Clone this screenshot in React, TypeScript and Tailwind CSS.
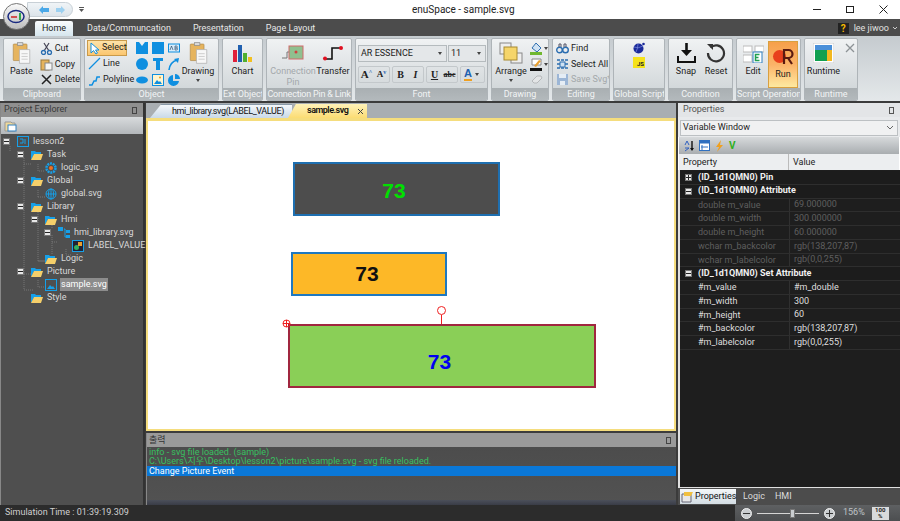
import { ReactNode } from 'react';

function Ico({ w = 16, h = 16, box, children, className = '' }: { w?: number; h?: number; box?: string; children: ReactNode; className?: string }) {
  return (
    <svg width={w} height={h} viewBox={box ?? `0 0 ${w} ${h}`} className={`shrink-0 ${className}`} fill="none">
      {children}
    </svg>
  );
}

function Clipboard({ w = 19, h = 22 }: { w?: number; h?: number }) {
  return (
    <Ico w={w} h={h} box="0 0 26 32">
      <rect x="1" y="3" width="20" height="24" rx="1" fill="#e6b45e" stroke="#b08a4a" />
      <rect x="7" y="1" width="8" height="4" fill="#d9d9d9" stroke="#888" />
      <path d="M10 11h15v20H10z" fill="#f7f7f7" stroke="#aaa" />
      <path d="M13 17h9M13 21h9M13 25h9" stroke="#bbb" />
    </Ico>
  );
}

function BigBtn({ label, icon, className = '', caret = false }: { label: string; icon: ReactNode; className?: string; caret?: boolean }) {
  return (
    <div className={`flex flex-col items-center ${className}`}>
      <div className="h-[22px] flex items-center justify-center mt-[3px]">{icon}</div>
      <div className="h-[14px] leading-[14px] whitespace-nowrap">{label}</div>
      {caret && <div className="w-0 h-0 border-x-[2.5px] border-x-transparent border-t-[3px] border-t-[#444] mt-[1px]" />}
    </div>
  );
}

function SmallBtn({ label, icon, className = '' }: { label: string; icon: ReactNode; className?: string }) {
  return (
    <div className={`flex items-center h-[15.5px] gap-[2px] whitespace-nowrap ${className}`}>
      {icon}
      <span>{label}</span>
    </div>
  );
}

function Group({ label, w, children, className = '', labelClass = '' }: { label: string; w: number; children: ReactNode; className?: string; labelClass?: string }) {
  return (
    <div
      className="flex flex-col h-[63px] rounded-[2px] border border-[#aeb4b8] bg-gradient-to-b from-[#f0f2f3] to-[#ccd2d5] overflow-hidden shrink-0"
      style={{ width: w }}
    >
      <div className={`flex-1 flex min-h-0 ${className}`}>{children}</div>
      <div className={`h-[12px] leading-[12px] text-center text-[#f2f4f5] bg-gradient-to-b from-[#a9afb2] to-[#b3b9bc] whitespace-nowrap ${labelClass}`}>{label}</div>
    </div>
  );
}

function FontBtn({ children, className = '' }: { children: ReactNode; className?: string }) {
  return <div className={`w-[15px] h-[15px] flex items-center justify-center text-[#222] ${className}`}>{children}</div>;
}

function Ribbon() {
  const blue = '#0f8fe0';
  return (
    <div className="h-[65px] bg-gradient-to-b from-[#c5cbcf] to-[#e4e8ea] flex items-start gap-[3px] pl-[3px] pt-[2px] text-[9px] text-[#1c1c1c]">
      <Group label="Clipboard" w={78} className="pl-[2px] gap-[3px]">
        <BigBtn label="Paste" icon={<Clipboard />} className="w-[32px]" />
        <div className="pt-[2px]">
          <SmallBtn label="Cut" icon={<Ico w={13} h={13}><path d="M4 1l5 8M9 1L4 9" stroke="#445" strokeWidth="1.2" /><circle cx="3.5" cy="10.5" r="2" stroke="#2a6db0" strokeWidth="1.3" /><circle cx="9.5" cy="10.5" r="2" stroke="#2a6db0" strokeWidth="1.3" /></Ico>} />
          <SmallBtn label="Copy" icon={<Ico w={13} h={13}><rect x="1" y="2" width="8" height="10" fill="#e6b45e" stroke="#9b7a3e" /><rect x="5" y="5" width="7" height="7" fill="#f6f6f6" stroke="#888" /></Ico>} />
          <SmallBtn label="Delete" icon={<Ico w={13} h={13}><path d="M2 2l9 9M11 2l-9 9" stroke="#222" strokeWidth="1.5" /></Ico>} />
        </div>
      </Group>

      <Group label="Object" w={135} className="pl-[2px]">
        <div className="w-[46px] pt-[1px] mr-[3px]">
          <SmallBtn label="Select" className="w-[40px] h-[16px] border border-[#c99a4a] bg-gradient-to-b from-[#fde3a9] to-[#fbc66f]" icon={<Ico w={12} h={13}><path d="M3 1v10l2.5-2.5L8 12l1.5-1-2-3H11z" fill="#fff" stroke={blue} /></Ico>} />
          <SmallBtn label="Line" icon={<Ico w={13} h={13}><path d="M1 12L12 1" stroke={blue} strokeWidth="1.2" /></Ico>} className="pl-[1px]" />
          <SmallBtn label="Polyline" icon={<Ico w={13} h={13}><path d="M1 12h3l2-4h2l1-4h3" stroke={blue} strokeWidth="1.5" /></Ico>} className="pl-[1px]" />
        </div>
        <div className="grid grid-cols-[12px_12px_12px] content-start gap-x-[4px] gap-y-[4px] pt-[3px] w-[44px] shrink-0">
          <Ico w={12} h={12}><path d="M0 0h3l3 4 3-4h3v12H0z" fill={blue} /></Ico>
          <Ico w={12} h={12}><rect width="12" height="12" fill={blue} /></Ico>
          <Ico w={12} h={12}><rect x=".5" y="2" width="11" height="8" fill="#d7ecfa" stroke={blue} /><path d="M2 8l1.5-4L5 8M7 4v4h1.5q1 0 1-1t-1-1H7m1.5 0q.8 0 .8-1T8.500 4H7" stroke="#135" strokeWidth=".6" /></Ico>
          <Ico w={12} h={12}><circle cx="6" cy="6" r="6" fill={blue} /></Ico>
          <Ico w={12} h={12}><path d="M1 0h10v3H8v9H4V3H1z" fill={blue} /></Ico>
          <Ico w={12} h={12}><path d="M1 12Q2 4 9 2" stroke={blue} strokeWidth="1.6" /><path d="M6 1l5-1-1 5z" fill={blue} /></Ico>
          <Ico w={12} h={12}><ellipse cx="6" cy="6" rx="6" ry="3.500" fill={blue} /></Ico>
          <Ico w={12} h={12}><rect x=".5" y=".5" width="11" height="11" fill="#fff5d0" stroke={blue} /><path d="M2 10l3-4 2 2 1-1 2 3z" fill={blue} /><circle cx="8" cy="3.500" r="1" fill="#e8a020" /></Ico>
          <Ico w={12} h={12}><path d="M5 1v6h6A5.500 5.500 0 1 1 5 1z" fill={blue} /><path d="M7 0a5 5 0 0 1 5 5H7z" fill={blue} /></Ico>
        </div>
        <BigBtn label="Drawing" icon={<Clipboard />} caret className="ml-[1px] w-[34px]" />
      </Group>

      <Group label="Ext Object" w={41}>
        <BigBtn
          label="Chart"
          className="w-full"
          icon={
            <Ico w={19} h={17}>
              <rect x="0" y="5" width="4" height="12" fill="#e0203a" />
              <rect x="5" y="0" width="4" height="17" fill="#2060b0" />
              <rect x="10" y="8" width="4" height="9" fill="#50b030" />
              <rect x="15" y="12" width="4" height="5" fill="#f2c020" />
            </Ico>
          }
        />
      </Group>

      <Group label="Connection Pin &amp; Link" w={86} className="pl-[5px]" labelClass="tracking-[-0.2px]">
        <div className="flex flex-col items-center w-[42px] text-[#a3a8ab] leading-[11px] text-center">
          <div className="h-[22px] mt-[3px] flex items-center">
            <Ico w={24} h={18}>
              <path d="M1 14h5V8h3" stroke="#777" />
              <rect x="8" y="2" width="14" height="13" fill="#8fc08f" stroke="#d06a6a" />
              <circle cx="15" cy="8" r="1.500" fill="#d04040" />
            </Ico>
          </div>
          <span className="mt-[2px]">Connection</span>
          <span>Pin</span>
        </div>
        <BigBtn
          label="Transfer"
          className="ml-[1px] w-[36px]"
          icon={
            <Ico w={22} h={16}>
              <path d="M3 14h7V3h9" stroke="#111" strokeWidth="1.6" />
              <circle cx="3" cy="13.500" r="2" fill="#e01020" />
              <circle cx="19" cy="3" r="2" fill="#e01020" />
            </Ico>
          }
        />
      </Group>

      <Group label="Font" w={133} className="flex-col pl-[2px] pt-[6px]">
        <div className="flex gap-[1px]">
          <div className="w-[89px] h-[17px] border border-[#b5bbbe] bg-[#e4e7e9] flex items-center justify-between px-[2px]">
            <span>AR ESSENCE</span>
            <div className="w-0 h-0 border-x-[2.5px] border-x-transparent border-t-[3px] border-t-[#444] mr-[2px]" />
          </div>
          <div className="w-[38px] h-[17px] border border-[#b5bbbe] bg-[#e4e7e9] flex items-center justify-between px-[2px]">
            <span>11</span>
            <div className="w-0 h-0 border-x-[2.5px] border-x-transparent border-t-[3px] border-t-[#444] mr-[2px]" />
          </div>
        </div>
        <div className="flex gap-[2px] mt-[4px] font-['Liberation_Serif',serif] font-bold">
          <div className="flex border border-[#c3c8cb] rounded-[2px]">
            <FontBtn className="text-[11px]">A<span className="text-[6px] text-[#2060b0] -mt-1">^</span></FontBtn>
            <FontBtn className="text-[9px]">A<span className="text-[6px] text-[#2060b0] -mt-1">v</span></FontBtn>
          </div>
          <div className="flex border border-[#c3c8cb] rounded-[2px]">
            <FontBtn className="text-[10px]">B</FontBtn>
            <FontBtn className="text-[10px] italic">I</FontBtn>
          </div>
          <div className="flex border border-[#c3c8cb] rounded-[2px]">
            <FontBtn className="text-[10px] underline">U</FontBtn>
            <FontBtn className="text-[8px] line-through">abc</FontBtn>
          </div>
          <div className="flex items-center border border-[#c3c8cb] rounded-[2px] w-[25px] pl-[3px] gap-[3px]">
            <span className="text-[11px] text-[#2060b0] border-b-2 border-[#f0a020] leading-[11px] font-['Liberation_Sans',sans-serif]">A</span>
            <div className="w-0 h-0 border-x-[2.5px] border-x-transparent border-t-[3px] border-t-[#444]" />
          </div>
        </div>
      </Group>

      <Group label="Drawing" w={58} className="pl-[2px]">
        <BigBtn
          label="Arrange"
          caret
          className="w-[34px]"
          icon={
            <Ico w={24} h={22}>
              <rect x="1" y="1" width="11" height="11" fill="#eee" stroke="#888" />
              <rect x="12" y="11" width="11" height="10" fill="#eee" stroke="#888" />
              <rect x="5" y="5" width="13" height="13" fill="#f5d56a" stroke="#a88a30" />
            </Ico>
          }
        />
        <div className="flex flex-col gap-[3px] pt-[3px] pl-[2px]">
          <div className="flex items-center gap-[1px]">
            <Ico w={13} h={13}><path d="M6 1l5 5-4 4-5-4z" fill="#cfe2f3" stroke="#3070b0" /><rect y="10" width="12" height="3" fill="#70b830" /></Ico>
            <div className="w-0 h-0 border-x-[2px] border-x-transparent border-t-[3px] border-t-[#444]" />
          </div>
          <div className="flex items-center gap-[1px]">
            <Ico w={13} h={13}><path d="M2 1h9v6H2z" fill="#fff" stroke="#888" /><path d="M4 8l5-6 2 1-5 6z" fill="#e8a030" /><rect y="10" width="12" height="3" fill="#111" /></Ico>
            <div className="w-0 h-0 border-x-[2px] border-x-transparent border-t-[3px] border-t-[#444]" />
          </div>
          <Ico w={13} h={11}><path d="M2 7l5-5h4l1 2-5 5H4z" fill="#e3e5e6" stroke="#b5b8ba" /></Ico>
        </div>
      </Group>

      <Group label="Editing" w={58} className="flex-col pl-[3px] pt-[2px]">
        <SmallBtn label="Find" icon={<Ico w={13} h={13}><circle cx="3.500" cy="8" r="2.800" stroke="#2a6db0" strokeWidth="1.400" /><circle cx="9.500" cy="8" r="2.800" stroke="#2a6db0" strokeWidth="1.400" /><path d="M3 5V2h2v3M8 5V2h2v3" stroke="#556" /></Ico>} />
        <SmallBtn label="Select All" icon={<Ico w={13} h={13}><path d="M1 2h11M1 6h11M1 10h11" stroke="#2a6db0" strokeWidth="1.500" strokeDasharray="3 1" /><rect x="4" y="4" width="5" height="5" fill="#cfe2f3" stroke="#2a6db0" /></Ico>} />
        <SmallBtn label="Save Svg*" className="text-[#a3a8ab]" icon={<Ico w={13} h={13}><rect x="1" y="1" width="11" height="11" fill="#9cb6d6" /><rect x="3" y="1" width="7" height="4" fill="#e5edf5" /><rect x="4" y="8" width="5" height="4" fill="#e5edf5" /></Ico>} />
      </Group>

      <Group label="Global Script" w={52} className="flex-col items-center pt-[3px] gap-[3px]">
        <Ico w={12} h={12}><circle cx="5.500" cy="6.500" r="5" fill="#1a2a9a" /><path d="M1 5q4 2 9-1M3 10q2-4 2-8" stroke="#7c8ce0" strokeWidth=".7" /><circle cx="10.500" cy="2" r="1.300" fill="#1a2a9a" /></Ico>
        <div className="w-[12px] h-[11px] bg-[#f5e21a] flex items-end justify-end text-[6px] leading-[8px] font-bold pr-[1px] text-[#222]">JS</div>
      </Group>

      <Group label="Condition" w={65} className="pl-[6px] gap-[7px]">
        <BigBtn
          label="Snap"
          className="w-[22px]"
          icon={
            <Ico w={19} h={20}>
              <path d="M9.500 0v9" stroke="#111" strokeWidth="2.600" />
              <path d="M4 7h11l-5.500 6z" fill="#111" />
              <path d="M1 13v6h17v-6" stroke="#111" strokeWidth="2" />
            </Ico>
          }
        />
        <BigBtn
          label="Reset"
          className="w-[24px]"
          icon={
            <Ico w={20} h={20}>
              <path d="M4.500 4.500A8 8 0 1 1 2 10" stroke="#333" strokeWidth="2.200" />
              <path d="M1 1h6v6z" fill="#333" />
            </Ico>
          }
        />
      </Group>

      <Group label="Script Operation" w={65} className="pl-[4px] gap-[3px]">
        <BigBtn
          label="Edit"
          className="w-[24px]"
          icon={
            <Ico w={21} h={19}>
              <rect x="0" y="2" width="9" height="6" fill="#fff" stroke="#bbb" />
              <rect x="12" y="2" width="9" height="6" fill="#fff" stroke="#bbb" />
              <rect x="0" y="11" width="9" height="7" fill="#fff" stroke="#bbb" />
              <rect x="10" y="8" width="9" height="11" fill="#fff" stroke="#3080c0" />
              <path d="M16.500 10.500h-4v6h4M12.500 13.500h3" stroke="#20a050" strokeWidth="1.500" />
            </Ico>
          }
        />
        <div className="w-[30px] h-[47px] mt-[2px] border border-[#d9a040] bg-gradient-to-b from-[#f6a04a] via-[#fbb368] to-[#fde9a0]">
          <BigBtn
            label="Run"
            className="w-full"
            icon={
              <Ico w={22} h={17}>
                <circle cx="7.500" cy="8.500" r="6.500" fill="#e8401c" />
                <path d="M12 16V2h4.500a3.500 3.500 0 0 1 0 8H12m4 0l4 6" stroke="#5a1a10" strokeWidth="2.200" />
              </Ico>
            }
          />
        </div>
      </Group>

      <Group label="Runtime" w={54} className="pl-[3px]">
        <BigBtn
          label="Runtime"
          className="w-[31px]"
          icon={
            <Ico w={21} h={20}>
              <rect x="0" y="0" width="21" height="20" fill="#fff" stroke="#ccc" />
              <rect x="2" y="2" width="17" height="5" fill="#4a90d9" />
              <rect x="2" y="7" width="12" height="11" fill="#10a050" />
              <rect x="14" y="7" width="5" height="11" fill="#f2b820" />
            </Ico>
          }
        />
      </Group>

      <div className="mt-[5px] ml-[-16px] relative">
        <Ico w={10} h={10}><path d="M1 1l8 8M9 1L1 9" stroke="#8d9396" strokeWidth="1.300" /></Ico>
      </div>
    </div>
  );
}

function Expander({ open = true }: { open?: boolean }) {
  return (
    <div className="w-[7px] h-[7px] bg-[#e8e8e8] border border-[#777] flex items-center justify-center shrink-0 relative">
      <div className="w-[5px] h-px bg-[#222]" />
      {!open && <div className="absolute w-px h-[5px] bg-[#222]" />}
    </div>
  );
}

function Folder() {
  return (
    <Ico w={12} h={10}>
      <path d="M0 1h4l1 1h5v2H0z" fill="#17a0e8" />
      <path d="M0 10V3h10v1H3z" fill="#17a0e8" />
      <path d="M0 10l3-6h9l-2 6z" fill="#f5cf6a" />
    </Ico>
  );
}

function TreeRow({ x, exp, icon, text, sel = false }: { x: number; exp?: boolean; icon: ReactNode; text: string; sel?: boolean }) {
  return (
    <div className="h-[13px] flex items-center relative" style={{ paddingLeft: x }}>
      {exp && <div className="absolute top-[3px]" style={{ left: x - 14 }}><Expander /></div>}
      {icon}
      <span className={`ml-[3px] leading-[13px] whitespace-nowrap px-[1px] ${sel ? 'bg-[#8c8c8c] text-white' : 'text-[#d9d9d9]'}`}>{text}</span>
    </div>
  );
}

function ProjectExplorer() {
  const b = '#17a0e8';
  const rows = [
    { x: 16, exp: true, text: 'lesson2', icon: <Ico w={12} h={11}><rect x=".5" y=".5" width="11" height="10" stroke={b} /><path d="M3 3h3v4H3M8 3v5" stroke={b} /></Ico> },
    { x: 30, exp: true, text: 'Task', icon: <Folder /> },
    { x: 44, text: 'logic_svg', icon: <Ico w={12} h={12}><circle cx="6" cy="6" r="4.500" stroke={b} strokeWidth="2.500" strokeDasharray="2 .8" /><circle cx="6" cy="6" r="2" fill="#f07020" /></Ico> },
    { x: 30, exp: true, text: 'Global', icon: <Folder /> },
    { x: 44, text: 'global.svg', icon: <Ico w={12} h={12}><circle cx="6" cy="6" r="5" stroke={b} /><path d="M1 6h10M6 1v10" stroke={b} /><ellipse cx="6" cy="6" rx="2.500" ry="5" stroke={b} /></Ico> },
    { x: 30, exp: true, text: 'Library', icon: <Folder /> },
    { x: 44, exp: true, text: 'Hmi', icon: <Folder /> },
    { x: 57, exp: true, text: 'hmi_library.svg', icon: <Ico w={12} h={11}><rect x="0" y="0" width="5" height="4" fill={b} /><rect x="8" y="3" width="4" height="3" fill={b} /><rect x="8" y="8" width="4" height="3" fill={b} /><path d="M6 2h1v8h1" stroke={b} /></Ico> },
    { x: 71, text: 'LABEL_VALUE', icon: <Ico w={12} h={12}><rect x=".5" y=".5" width="11" height="11" fill="#223" stroke={b} /><circle cx="4.500" cy="7.500" r="2.500" fill="#30b060" /><rect x="6" y="2" width="4" height="4" fill="#e8a030" /></Ico> },
    { x: 44, text: 'Logic', icon: <Folder /> },
    { x: 30, exp: true, text: 'Picture', icon: <Folder /> },
    { x: 44, text: 'sample.svg', sel: true, icon: <Ico w={12} h={12}><rect x=".5" y=".5" width="11" height="11" stroke={b} /><path d="M2 10l3-4 2 2 1-1 2 3z" fill={b} /></Ico> },
    { x: 30, text: 'Style', icon: <Folder /> },
  ];
  return (
    <div className="w-[145px] shrink-0 flex flex-col border-l border-[#888] border-r-2 border-r-[#333] bg-[#4f4f4f]">
      <div className="h-[14px] bg-[#8f8f8f] flex items-center justify-between px-[3px] text-[#3a3a3a] text-[9px]">
        <span>Project Explorer</span>
        <span className="w-[5px] h-[7px] border border-[#444] mr-[3px]" />
      </div>
      <div className="h-[17px] bg-gradient-to-b from-[#d8dbdd] to-[#b3b7ba] flex items-center pl-[3px]">
        <Ico w={13} h={12}><path d="M1 2h6l1 1h3v8H1z" fill="#f0d99a" stroke="#999" /><rect x="4" y="5" width="8" height="6" fill="#fff" stroke="#3080c0" /></Ico>
      </div>
      <div className="relative text-[9px] pt-[1px]">
        <svg className="absolute left-0 top-0" width="100" height="170" fill="none" stroke="#777" strokeDasharray="1 1">
          <path d="M9 12v6M23 24v132h9M23 30h7M37 30v7h7M37 63h7M37 56v7M37 76v51h7M51 89v6M51 101v20M51 108h6M65 115v6h6M37 127h7M23 140h7M37 146v7h7" />
        </svg>
        {rows.map((r) => (
          <TreeRow key={r.text} x={r.x} exp={r.exp} icon={r.icon} text={r.text} sel={r.sel} />
        ))}
      </div>
    </div>
  );
}

function Shape({ className, text, textClass }: { className: string; text: string; textClass: string }) {
  return (
    <div className={`absolute flex items-center justify-center border-2 ${className}`}>
      <span className={`font-['Liberation_Sans',sans-serif] font-bold text-[21px] ${textClass}`}>{text}</span>
    </div>
  );
}

function DocArea() {
  return (
    <div className="w-[530px] shrink-0 flex flex-col ml-[1px]">
      <div className="h-[15px] bg-[#a9aeb2] flex items-end text-[9px] text-[#111] pl-[4px]">
        <div className="w-[142px] h-[14px] bg-gradient-to-b from-[#f5f8fb] to-[#c9d9e8] flex items-center justify-center border-t border-[#8a9aa8] [clip-path:polygon(8%_0,100%_0,100%_100%,0_100%)] pl-[14px] tracking-[-0.4px]">
          hmi_library.svg(LABEL_VALUE)
        </div>
        <div className="w-[79px] h-[14px] -ml-[4px] bg-gradient-to-b from-[#fff2b8] to-[#fbdc72] flex items-center font-semibold pl-[19px] [clip-path:polygon(10%_0,100%_0,100%_100%,0_100%)]">
          <span className="tracking-[-0.5px]">sample.svg</span>
          <Ico w={7} h={7} className="ml-[9px]"><path d="M1 1l5 5M6 1L1 6" stroke="#444" /></Ico>
        </div>
      </div>
      <div className="h-[313px] border-2 border-[#f5dd7d] border-t-[3px] bg-white relative">
        <Shape className="left-[145px] top-[41px] w-[207px] h-[54px] border-[#1e6fb0] bg-[#4d4d4d] pt-[4px] pr-[5px]" text="73" textClass="text-[#00e000]" />
        <Shape className="left-[143px] top-[131px] w-[156px] h-[44px] border-[#1e78c0] bg-[#fdb827] pr-[4px]" text="73" textClass="text-[#111]" />
        <Shape className="left-[140px] top-[203px] w-[308px] h-[64px] border-[#a0263f] bg-[#8acf57] pt-[12px] pr-[5px]" text="73" textClass="text-[#0000f0]" />
        <div className="absolute left-[289px] top-[185px] w-[9px] h-[9px] rounded-full border-[1.500px] border-[#f02020] bg-white" />
        <div className="absolute left-[293px] top-[194px] w-px h-[9px] bg-[#f02020]" />
        <svg className="absolute left-[134px] top-[198px]" width="9" height="9" fill="none" stroke="#f02020">
          <circle cx="4.500" cy="4.500" r="3.500" />
          <path d="M1 4.500h7M4.500 1v7" />
        </svg>
      </div>
      <div className="h-[2px] bg-[#3c3c3c]" />
      <div className="flex-1 flex flex-col bg-gradient-to-b from-[#4b4b4b] to-[#525252] text-[9px] border-l border-[#888]">
        <div className="h-[14px] bg-[#9a9a9a] flex items-center justify-between pl-[2px] pr-[5px] text-[#333] text-[9px] font-['Noto_Sans_CJK_KR',sans-serif]">
          <span>출력</span>
          <span className="w-[5px] h-[7px] border border-[#444]" />
        </div>
        <div className="h-[10px] leading-[10px] pl-[2px] text-[#38c060] whitespace-nowrap">info - svg file loaded. (sample)</div>
        <div className="h-[9px] leading-[9px] pl-[2px] text-[#38c060] whitespace-nowrap font-['Roboto','Noto_Sans_CJK_KR',sans-serif]">{'C:\\Users\\지우\\Desktop\\lesson2\\picture\\sample.svg - svg file reloaded.'}</div>
        <div className="h-[10px] leading-[10px] pl-[2px] bg-[#0a78d8] text-white whitespace-nowrap">Change Picture Event</div>
        <div className="flex-1" />
        <div className="h-[5px] bg-gradient-to-b from-[#4b4f5a] to-[#3a3d47]" />
      </div>
    </div>
  );
}

function GridGroup({ text, open = true }: { text: string; open?: boolean }) {
  return (
    <div className="h-[13.75px] flex items-center border-b border-[#2e2e2e] pl-[5px] text-[#f0f0f0] font-bold bg-[#1c1c1c]">
      <Expander open={open} />
      <span className="ml-[6px] whitespace-nowrap">{text}</span>
    </div>
  );
}

function GridRow({ name, value, dim = false }: { name: string; value: string; dim?: boolean }) {
  return (
    <div className={`h-[13.75px] flex items-center border-b border-[#2e2e2e] whitespace-nowrap ${dim ? 'text-[#5e5e5e]' : 'text-[#dedede]'}`}>
      <span className="w-[110px] pl-[18px] border-r border-[#303030] h-full leading-[13px]">{name}</span>
      <span className="pl-[4px] leading-[13px]">{value}</span>
    </div>
  );
}

function Properties() {
  return (
    <div className="flex-1 flex flex-col ml-[2px] text-[9px] min-w-0">
      <div className="h-[14px] bg-[#e3e5e7] flex items-center justify-between px-[5px] text-[#555] text-[9px]">
        <span>Properties</span>
        <span className="w-[5px] h-[7px] border border-[#555] mr-[1px]" />
      </div>
      <div className="h-[20px] bg-[#e8eaec] px-[2px] pt-[3px]">
        <div className="h-[16px] border border-[#bcc0c3] bg-[#f0f1f2] flex items-center justify-between px-[2px] text-[#222]">
          <span>Variable Window</span>
          <Ico w={8} h={6} className="mr-[1px]"><path d="M1 1l3 3 3-3" stroke="#666" /></Ico>
        </div>
      </div>
      <div className="h-[17px] bg-gradient-to-b from-[#d7dadc] to-[#a9adb0] flex items-center gap-[4px] pl-[5px] border-x border-[#fff]">
        <Ico w={11} h={12}><path d="M1 5l2-4 2 4M1 11l4-3H1" stroke="#3060c0" /><path d="M8 1v9" stroke="#111" strokeWidth="1.400" /><path d="M6 8l2 3 2-3z" fill="#111" /></Ico>
        <Ico w={11} h={11}><rect x=".5" y=".5" width="10" height="10" fill="#fff" stroke="#3070c0" /><rect x=".5" y=".5" width="10" height="3" fill="#3070c0" /><path d="M3 5v5M2 7h7" stroke="#3070c0" /></Ico>
        <Ico w={10} h={12}><path d="M7 0L2 7h3L3 12l6-7H6z" fill="#f0a020" /></Ico>
        <span className="ml-[1px] text-[#30b020] font-bold text-[10px]">V</span>
      </div>
      <div className="h-[16px] flex bg-[#eceef0] text-[#222] border-x border-white">
        <div className="w-[110px] pl-[4px] border-r border-[#bbb] leading-[17px]">Property</div>
        <div className="pl-[4px] leading-[17px]">Value</div>
      </div>
      <div className="flex-1 bg-[#1e1e1e] border-l-2 border-b border-[#e0e0e0] pt-[1px]">
        <GridGroup text="(ID_1d1QMN0) Pin" open={false} />
        <GridGroup text="(ID_1d1QMN0) Attribute" />
        <GridRow dim name="double m_value" value="69.000000" />
        <GridRow dim name="double m_width" value="300.000000" />
        <GridRow dim name="double m_height" value="60.000000" />
        <GridRow dim name="wchar m_backcolor" value="rgb(138,207,87)" />
        <GridRow dim name="wchar m_labelcolor" value="rgb(0,0,255)" />
        <GridGroup text="(ID_1d1QMN0) Set Attribute" />
        <GridRow name="#m_value" value="#m_double" />
        <GridRow name="#m_width" value="300" />
        <GridRow name="#m_height" value="60" />
        <GridRow name="#m_backcolor" value="rgb(138,207,87)" />
        <GridRow name="#m_labelcolor" value="rgb(0,0,255)" />
      </div>
      <div className="h-[17px] bg-[#4c4c4c] flex items-center text-[#dcdcdc] shrink-0">
        <div className="ml-[2px] w-[56px] h-[15px] bg-gradient-to-b from-[#f4f7f9] to-[#d3dde3] text-[#111] flex items-center gap-[1px] pl-[1px]">
          <Ico w={13} h={12}><path d="M1 3h9v8H1z" fill="#e8e8e8" stroke="#667" /><path d="M3 1h9l-2 4H3z" fill="#f0c040" /></Ico>
          Properties
        </div>
        <span className="ml-[7px]">Logic</span>
        <span className="ml-[10px]">HMI</span>
      </div>
    </div>
  );
}

function StatusBar() {
  return (
    <div className="h-[16px] bg-[#2c2c2c] flex items-center text-[9px] text-[#d0d0d0] pl-[5px]">
      <span>Simulation Time : 01:39:19.309</span>
      <div className="ml-auto w-[165px] h-full bg-gradient-to-b from-[#5e6062] to-[#4c4e50] flex items-center pl-[6px]">
        <div className="w-[11px] h-[11px] rounded-full bg-[#c9cdd0] border border-[#eee] flex items-center justify-center"><div className="w-[7px] h-px bg-[#333]" /></div>
        <div className="w-[62px] h-px bg-[#d5d5d5] ml-[5px] mr-[5px] relative">
          <div className="absolute left-[33px] -top-[4px] w-[5px] h-[9px] bg-[#c9cdd0] border border-[#777]" />
        </div>
        <div className="w-[11px] h-[11px] rounded-full bg-[#c9cdd0] border border-[#eee] flex items-center justify-center relative">
          <div className="w-[7px] h-px bg-[#333]" />
          <div className="absolute w-px h-[7px] bg-[#333]" />
        </div>
        <span className="ml-[8px] text-[#bfc3c6]">156%</span>
        <div className="ml-[7px] w-[17px] h-[13px] bg-[#d8dadc] text-[#222] text-[6px] leading-[6px] text-center font-bold">100<br />%</div>
      </div>
    </div>
  );
}

export default function App() {
  return (
    <div className="w-[900px] h-[521px] overflow-hidden bg-[#3b3b3b] relative font-['Roboto','Noto_Sans_CJK_KR',sans-serif]">
      {/* Title bar */}
      <div className="h-[19px] bg-white flex items-center relative text-[10px] text-[#222]">
        <div className="ml-[27px] w-[46px] h-[15px] rounded-r-full bg-gradient-to-b from-[#f0f4f7] to-[#dce4ea] border border-[#c8d0d6] flex items-center gap-[7px] pl-[11px]">
          <Ico w={10} h={8}><path d="M0 4l4-4v2h6v4H4v2z" fill="#4aa8e8" /></Ico>
          <Ico w={9} h={8}><path d="M9 4L5 0v2H0v4h5v2z" fill="#9cd0f0" /></Ico>
        </div>
        <Ico w={5} h={6} className="ml-[6px]"><path d="M0 2h5l-2.500 3z" fill="#555" /><path d="M0 .5h5" stroke="#555" /></Ico>
        <span className="absolute left-[412px] top-[3px] leading-[14px]">enuSpace - sample.svg</span>
        <div className="ml-auto flex items-center mr-[12px]">
          <div className="w-[8px] h-px bg-[#222] mr-[25px]" />
          <div className="w-[8px] h-[7px] border border-[#222] mr-[25px]" />
          <Ico w={9} h={9}><path d="M.5.5l8 8M8.500.5l-8 8" stroke="#222" /></Ico>
        </div>
      </div>

      {/* Tab row */}
      <div className="h-[17px] bg-[#4c4c4c] flex items-end text-[9px] text-[#e8e8e8]">
        <div className="ml-[35px] w-[38px] h-[15px] rounded-t-[2px] bg-gradient-to-b from-[#fafcfd] to-[#d6e6ee] text-[#222] text-center leading-[15px]">Home</div>
        <span className="ml-[14px] h-[15px] leading-[15px]">Data/Communcation</span>
        <span className="ml-[22px] h-[15px] leading-[15px]">Presentation</span>
        <span className="ml-[22px] h-[15px] leading-[15px]">Page Layout</span>
        <div className="ml-auto h-[15px] flex items-center pr-[2px]">
          <div className="w-[11px] h-[11px] bg-[#222] text-[#f5b800] font-bold text-[10px] leading-[11px] text-center mr-[5px]">?</div>
          <span className="text-[#e0e0e0]">lee jiwoo</span>
          <Ico w={6} h={5} className="ml-[3px]"><path d="M1 1l2 2 2-2" stroke="#ccc" /></Ico>
        </div>
      </div>

      <Ribbon />

      {/* Body */}
      <div className="h-[402px] mt-[2px] flex">
        <ProjectExplorer />
        <DocArea />
        <Properties />
      </div>

      <StatusBar />

      {/* Application button */}
      <div className="absolute left-[3px] top-[3px] w-[27px] h-[27px] rounded-full bg-gradient-to-b from-[#fafafa] to-[#bdbdbd] border border-[#777] flex items-center justify-center">
        <Ico w={19} h={15}>
          <ellipse cx="9" cy="7.500" rx="8" ry="6" stroke="#1a2a80" strokeWidth="1.500" />
          <path d="M4 8h6" stroke="#d02020" strokeWidth="1.500" />
          <path d="M13 4v7" stroke="#20a040" strokeWidth="1.800" />
        </Ico>
      </div>
    </div>
  );
}
